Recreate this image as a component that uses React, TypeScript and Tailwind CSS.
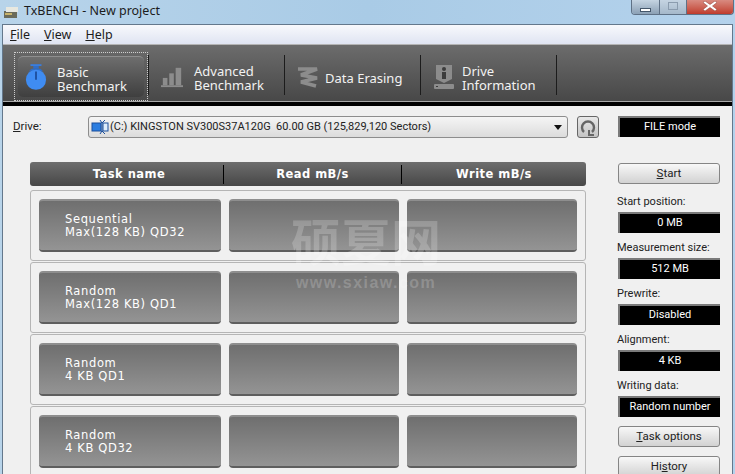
import type { ReactNode } from "react";

const uiFont = { fontFamily: 'Roboto, "Liberation Sans", sans-serif' };

const tasks = [
    ["Sequential", "Max(128 KB) QD32"],
    ["Random", "Max(128 KB) QD1"],
    ["Random", "4 KB QD1"],
    ["Random", "4 KB QD32"],
];

const settings = [
    { label: "Start position:", value: "0 MB" },
    { label: "Measurement size:", value: "512 MB" },
    { label: "Prewrite:", value: "Disabled" },
    { label: "Alignment:", value: "4 KB" },
    { label: "Writing data:", value: "Random number" },
];

function TimerIcon() {
    return (
        <svg width="22" height="28" viewBox="0 0 24 30">
            <rect x="6" y="1" width="12" height="2" fill="#3a7ddc" />
            <rect x="9" y="3" width="6" height="3" fill="#2f6ec8" />
            <path d="M4 9 L7 6 H17 L20 9 Z" fill="#2f6ec8" />
            <circle cx="12" cy="18" r="11" fill="#3f8cf2" />
            <rect x="11" y="9" width="2" height="9" fill="#1d4f9e" />
        </svg>
    );
}

function BarsIcon() {
    return (
        <svg width="24" height="22" viewBox="0 0 24 22" fill="#8c8c8c">
            <rect x="2" y="12" width="5" height="8" />
            <rect x="9" y="7" width="5" height="13" />
            <rect x="16" y="1" width="6" height="19" />
            <rect x="0" y="20" width="24" height="2" />
        </svg>
    );
}

function EraseIcon() {
    return (
        <svg width="22" height="22" viewBox="0 0 22 22" fill="none" stroke="#8c8c8c" strokeWidth="3.6">
            <path d="M1 3 L20 3 L4 9 L20 12 L4 16 L19 20" strokeLinejoin="bevel" />
        </svg>
    );
}

function InfoIcon() {
    return (
        <svg width="22" height="26" viewBox="0 0 22 26">
            <path d="M3 1 H19 V15 L11 19 L3 15 Z" fill="#8c8c8c" />
            <circle cx="11" cy="5" r="2" fill="#3c3c3c" />
            <rect x="9" y="8" width="4" height="7" fill="#3c3c3c" />
            <rect x="1" y="20" width="20" height="5" rx="1" fill="#8c8c8c" />
            <rect x="3" y="22" width="2" height="1" fill="#3c3c3c" />
        </svg>
    );
}

function DriveIcon() {
    return (
        <svg width="18" height="16" viewBox="0 0 18 16" fill="none">
            <rect x="1" y="4" width="9" height="8" fill="#2b7de0" stroke="#1a4f9c" />
            <rect x="12" y="4" width="5" height="8" fill="#dcecfb" stroke="#1a4f9c" />
            <path d="M9 1 L11 4 M14 1 L11 4 M11 12 L9 15 M11 12 L14 15 M11 3 V13" stroke="#1a4f9c" />
        </svg>
    );
}

function ToolbarTab({ icon, lines, iconWidth, selected }: { icon: ReactNode; lines: string[]; iconWidth: string; selected?: boolean }) {
    return (
        <>
            <div className="w-[134px] h-[49px] self-end">
                <div className={selected
                    ? "h-full border border-dotted border-[#cfcfcf] p-[3px]"
                    : "h-full p-[4px]"}>
                    <div className={`h-full flex items-center rounded-[5px] ${selected
                        ? "bg-gradient-to-b from-[#6e6e6e] to-[#3f3f3f] border-t border-[#8f8f8f] pl-[7px]"
                        : "pl-[7px]"}`}>
                        <div className={`${iconWidth} flex justify-center shrink-0`}>{icon}</div>
                        <div className="text-[13px] leading-[14px] text-[#f2f2f2] mt-[3px]" style={{ fontFamily: '"Noto Sans", sans-serif' }}>
                            {lines.map((line) => <div key={line}>{line}</div>)}
                        </div>
                    </div>
                </div>
            </div>
            <div className="w-[1px] h-[40px] bg-[#1c1c1c] mr-[1px] mt-[10px] self-start" />
        </>
    );
}

function GrayButton({ children, className }: { children: ReactNode; className?: string }) {
    return (
        <div className={`h-[21px] flex items-center justify-center rounded-[3px] border border-[#858585] bg-gradient-to-b from-[#f8f8f8] to-[#d2d2d2] text-[11.5px] text-[#222] ${className ?? ""}`}>
            {children}
        </div>
    );
}

function ValueBox({ children }: { children: ReactNode }) {
    return (
        <div className="h-[21px] flex items-center justify-center bg-black border-t-2 border-l-2 border-[#7a7a7a] text-[11px] whitespace-nowrap text-white">
            {children}
        </div>
    );
}

function ResultCell({ className, children }: { className: string; children?: ReactNode }) {
    return (
        <div className={`h-[53px] rounded-[4px] bg-gradient-to-b from-[#6f6f6f] to-[#949494] border-t-2 border-t-[#8e8e8e] border-b-2 border-b-[#5e5e5e] ${className}`}>
            {children}
        </div>
    );
}

export default function App() {
    return (
        <div className="relative w-[735px] h-[474px] overflow-hidden bg-gradient-to-r from-[#b8d4ea] via-[#a9cbe6] to-[#b4d2ec]" style={uiFont}>
            {/* Title bar */}
            <div className="h-[24px] flex items-center pl-[3px]">
                <svg width="16" height="16" viewBox="0 0 16 16">
                    <rect x="1" y="7" width="13" height="7" fill="#6b6b5a" />
                    <rect x="3" y="3" width="12" height="5" fill="#e8e8e0" />
                    <rect x="2" y="9" width="7" height="2" fill="#c9b36a" />
                </svg>
                <span className="ml-[5px] mb-[2px] text-[12.5px] text-[#1c1c1c]" style={{ fontFamily: '"Noto Sans", sans-serif' }}>TxBENCH - New project</span>
                <div className="ml-auto self-start flex h-[15px] w-[103px] mr-[1px] rounded-b-[4px] border border-t-0 border-[#5f7186] overflow-hidden">
                    <div className="w-[28px] flex items-center justify-center bg-gradient-to-b from-[#c5d4e2] to-[#8ba0b5] border-r border-[#5f7186]">
                        <div className="w-[11px] h-[4px] mt-[5px] bg-white border border-[#44566a]" />
                    </div>
                    <div className="w-[27px] flex items-center justify-center bg-gradient-to-b from-[#c5d4e2] to-[#a5b8ca] border-r border-[#5f7186]">
                        <div className="w-[10px] h-[8px] border border-[#8b9cae] mb-[3px]" />
                    </div>
                    <div className="flex-1 flex items-center justify-center bg-gradient-to-b from-[#d88a80] to-[#bf3a2c]">
                        <svg width="14" height="10" viewBox="0 0 14 10" className="mb-[3px]">
                            <path d="M2 0 L7 3.5 L12 0 L14 1.5 L9.5 5 L14 8.5 L12 10 L7 6.5 L2 10 L0 8.5 L4.5 5 L0 1.5 Z" fill="#fff" stroke="#8b3a30" strokeWidth="0.5" />
                        </svg>
                    </div>
                </div>
            </div>

            {/* Window */}
            <div className="mx-[2px] h-[450px] border border-[#64788c] border-b-0 bg-[#f0f0f0]">
                {/* Menu */}
                <div className="h-[20px] flex items-center gap-[14px] pl-[7px] pt-[1px] bg-gradient-to-b from-[#f8f9fc] to-[#dfe4f2] border-b border-[#b4b4b4] text-[12.5px] text-[#1c1c1c]" style={{ fontFamily: '"Noto Sans", sans-serif' }}>
                    <span><span className="underline">F</span>ile</span>
                    <span><span className="underline">V</span>iew</span>
                    <span><span className="underline">H</span>elp</span>
                </div>

                {/* Toolbar */}
                <div className="h-[57px] flex pl-[11px] bg-gradient-to-b from-[#6c6c6c] to-[#484848] border-b border-[#a8a8a8]">
                    <ToolbarTab selected icon={<TimerIcon />} iconWidth="w-[22px] mr-[10px]" lines={["Basic", "Benchmark"]} />
                    <ToolbarTab icon={<BarsIcon />} iconWidth="w-[22px] mr-[11px]" lines={["Advanced", "Benchmark"]} />
                    <ToolbarTab icon={<EraseIcon />} iconWidth="w-[22px] mr-[6px]" lines={["Data Erasing"]} />
                    <ToolbarTab icon={<InfoIcon />} iconWidth="w-[22px] mr-[7px]" lines={["Drive", "Information"]} />
                </div>
                <div className="h-[4px] bg-black" />

                {/* Body */}
                <div className="flex pl-[27px] pt-[10px]">
                    <div className="w-[556px] shrink-0">
                        {/* Drive selector */}
                        <div className="h-[22px] w-[590px] flex items-center -ml-[17px]">
                            <span className="w-[75px] shrink-0 text-[11.5px] text-[#222]"><span className="underline">D</span>rive:</span>
                            <div className="w-[480px] shrink-0 h-[22px] flex items-center pl-[2px] pr-[5px] rounded-[3px] border border-[#8d8d8d] bg-gradient-to-b from-[#f5f5f5] to-[#dcdcdc] text-[11px] text-[#222]">
                                <DriveIcon />
                                <span className="ml-[1px] pt-[1px] whitespace-nowrap">(C:) KINGSTON SV300S37A120G&nbsp; 60.00 GB (125,829,120 Sectors)</span>
                                <svg className="ml-auto" width="8" height="5" viewBox="0 0 8 5"><path d="M0 0 H8 L4 5 Z" fill="#111" /></svg>
                            </div>
                            <div className="ml-[9px] w-[22px] h-[22px] shrink-0 flex items-center justify-center rounded-[3px] border border-[#666] bg-gradient-to-b from-[#e8e8e8] to-[#c4c4c4]">
                                <svg width="16" height="17" viewBox="0 0 16 17" fill="none" stroke="#666" strokeWidth="2.4">
                                    <path d="M4 13 A6 6 0 1 1 12 13" />
                                    <path d="M9 11 L9 16 L14 16" strokeWidth="2" />
                                </svg>
                            </div>
                        </div>

                        {/* Task table header */}
                        <div className="mt-[24px] h-[24px] flex items-center pt-[1px] rounded-[3px] bg-gradient-to-b from-[#6e6e6e] to-[#474747] text-[11.5px] font-bold tracking-[0.04em] text-white" style={{ fontFamily: '"DejaVu Sans", sans-serif' }}>
                            <div className="w-[193px] pl-[5px] text-center">Task name</div>
                            <div className="w-[1px] h-[19px] bg-black" />
                            <div className="w-[177px] text-center">Read mB/s</div>
                            <div className="w-[1px] h-[19px] bg-black" />
                            <div className="flex-1 text-center">Write mB/s</div>
                        </div>

                        {/* Task rows */}
                        <div className="mt-[4px] flex flex-col gap-[1px]">
                            {tasks.map(([kind, detail]) => (
                                <div key={detail} className="h-[71px] flex items-center gap-[8px] pl-[8px] rounded-[3px] border border-[#b5b5b5] bg-[#f0f0f0]">
                                    <ResultCell className="w-[182px]">
                                        <div className="pl-[26px] pt-[12px] text-[11.5px] leading-[13px] tracking-[0.055em] text-white" style={{ fontFamily: '"DejaVu Sans", sans-serif' }}>
                                            <div>{kind}</div>
                                            <div>{detail}</div>
                                        </div>
                                    </ResultCell>
                                    <ResultCell className="w-[170px]" />
                                    <ResultCell className="w-[170px]" />
                                </div>
                            ))}
                        </div>
                    </div>

                    {/* Right column */}
                    <div className="w-[102px] ml-[32px] shrink-0 flex flex-col">
                        <ValueBox>FILE mode</ValueBox>
                        <GrayButton className="mt-[26px]"><span><span className="underline">S</span>tart</span></GrayButton>
                        {settings.map((item, i) => (
                            <div key={item.label} className={i === 0 ? "mt-[9px]" : "mt-[6px]"}>
                                <div className="h-[19px] -ml-[1px] text-[11px] leading-[17px] whitespace-nowrap text-[#222]">{item.label}</div>
                                <ValueBox>{item.value}</ValueBox>
                            </div>
                        ))}
                        <GrayButton className="mt-[9px]"><span><span className="underline">T</span>ask options</span></GrayButton>
                        <GrayButton className="mt-[9px]"><span>Hi<span className="underline">s</span>tory</span></GrayButton>
                    </div>
                </div>
            </div>

            {/* Watermark */}
            <div className="absolute left-[291px] top-[210px] w-[150px] text-center pointer-events-none text-white/20 font-bold">
                <div className="text-[50px] leading-[58px] whitespace-nowrap" style={{ fontFamily: '"Noto Sans CJK SC", sans-serif' }}>硕夏网</div>
                <div className="mt-[5px] text-[16px] leading-[20px] tracking-[0.09em] whitespace-nowrap" style={{ fontFamily: '"Liberation Sans", sans-serif' }}>www.sxiaw.com</div>
            </div>
        </div>
    );
}
